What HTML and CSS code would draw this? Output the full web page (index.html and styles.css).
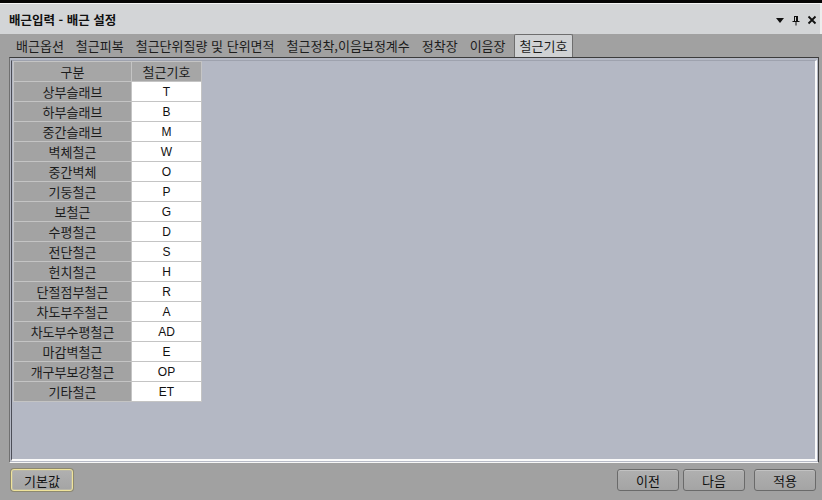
FILE: index.html
```html
<!DOCTYPE html>
<html lang="ko">
<head>
<meta charset="utf-8">
<title>배근입력 - 배근 설정</title>
<link rel="stylesheet" href="styles.css">
</head>
<body>
<div class="window">
  <div class="topline"></div>
  <div class="titlebar">
    <span class="title">배근입력 - 배근 설정</span>
    <div class="title-tools">
      <svg width="10" height="10" viewBox="0 0 10 10"><polygon points="1,3 9,3 5,8" fill="#111"/></svg>
      <svg width="10" height="11" viewBox="0 0 10 11"><path d="M3 1h4v5h1.5v1h-7v-1H3z M4 2v4h1V2z M4.5 7h1v3.5h-1z" fill="#111"/></svg>
      <svg width="10" height="10" viewBox="0 0 10 10"><path d="M1.5 1.5l7 7M8.5 1.5l-7 7" stroke="#111" stroke-width="1.8"/></svg>
    </div>
  </div>
  <div class="tabs">
    <span class="tab">배근옵션</span>
    <span class="tab">철근피복</span>
    <span class="tab">철근단위질량 및 단위면적</span>
    <span class="tab">철근정착,이음보정계수</span>
    <span class="tab">정착장</span>
    <span class="tab">이음장</span>
    <span class="tab active">철근기호</span>
  </div>
  <div class="panel">
    <div class="panel-inner">
      <table class="grid">
        <thead>
          <tr><th class="c1">구분</th><th class="c2">철근기호</th></tr>
        </thead>
        <tbody>
          <tr><td class="lbl">상부슬래브</td><td class="val">T</td></tr>
          <tr><td class="lbl">하부슬래브</td><td class="val">B</td></tr>
          <tr><td class="lbl">중간슬래브</td><td class="val">M</td></tr>
          <tr><td class="lbl">벽체철근</td><td class="val">W</td></tr>
          <tr><td class="lbl">중간벽체</td><td class="val">O</td></tr>
          <tr><td class="lbl">기둥철근</td><td class="val">P</td></tr>
          <tr><td class="lbl">보철근</td><td class="val">G</td></tr>
          <tr><td class="lbl">수평철근</td><td class="val">D</td></tr>
          <tr><td class="lbl">전단철근</td><td class="val">S</td></tr>
          <tr><td class="lbl">헌치철근</td><td class="val">H</td></tr>
          <tr><td class="lbl">단절점부철근</td><td class="val">R</td></tr>
          <tr><td class="lbl">차도부주철근</td><td class="val">A</td></tr>
          <tr><td class="lbl">차도부수평철근</td><td class="val">AD</td></tr>
          <tr><td class="lbl">마감벽철근</td><td class="val">E</td></tr>
          <tr><td class="lbl">개구부보강철근</td><td class="val">OP</td></tr>
          <tr><td class="lbl">기타철근</td><td class="val">ET</td></tr>
        </tbody>
      </table>
    </div>
  </div>
  <div class="footer">
    <button class="btn focus">기본값</button>
    <div class="spacer"></div>
    <button class="btn">이전</button>
    <button class="btn">다음</button>
    <button class="btn wide-gap">적용</button>
  </div>
</div>
</body>
</html>
```
FILE: styles.css
```css
html, body {
  margin: 0;
  padding: 0;
}
body {
  width: 822px;
  height: 500px;
  overflow: hidden;
  background: #a1a1a1;
  font-family: "Noto Sans CJK KR", "Noto Sans", sans-serif;
  font-size: 13px;
  color: #1a1a1a;
}
.window {
  display: flex;
  flex-direction: column;
  height: 500px;
}
.topline {
  height: 3px;
  background: #050505;
  border-bottom: 1px solid #f4f4f4;
}
.titlebar {
  height: 30px;
  background: #d3d5d7;
  display: flex;
  align-items: center;
  padding: 0 3px 0 9px;
  border-right: 2px solid #eceded;
}
.title {
  font-weight: bold;
  font-size: 12.5px;
  color: #101010;
  padding-top: 1px;
}
.title-tools {
  margin-left: auto;
  display: flex;
  align-items: center;
  gap: 6px;
  padding-top: 2px;
}
.tabs {
  height: 23px;
  display: flex;
  align-items: flex-end;
  padding-left: 10px;
}
.tab {
  height: 22px;
  line-height: 22px;
  padding: 0 6px;
  color: #1c1c1c;
  white-space: nowrap;
}
.tab.active {
  background: #d0d2d4;
  border: 1px solid #6e6e6e;
  border-bottom: none;
  border-radius: 2px 2px 0 0;
  height: 22px;
  padding: 0 5px;
  margin-left: 2px;
}
.panel {
  margin: 0 3px 0 9px;
  height: 406px;
  border-top: 1px solid #3c3c3c;
  border-left: 1px solid #707070;
  border-right: 1px solid #404040;
  border-bottom: 1px solid #f6f6f6;
  background: #b5b9c5;
  padding: 2px 1px 1px 1px;
  box-sizing: border-box;
}
.panel-inner {
  height: 100%;
  box-sizing: border-box;
  border-top: 1px solid #9ea2ae;
  border-left: 1px solid #4c4e58;
  border-right: 2px solid #fafafa;
  border-bottom: 2px solid #fafafa;
  padding: 0 0 0 1px;
  background: #b4b8c4;
}
.grid {
  border-collapse: collapse;
  font-size: 13px;
}
.grid th, .grid td {
  height: 19px;
  padding: 0;
  text-align: center;
  border: 1px solid #c4c4c4;
  line-height: 18px;
  font-weight: normal;
  color: #1c1c1c;
}
.grid th {
  background: #a6a6a6;
}
.grid .c1 { width: 117px; }
.grid .c2 { width: 69px; }
.grid td.lbl {
  background: #a3a3a3;
}
.grid td.val {
  background: #ffffff;
  font-family: "Liberation Sans", Arial, sans-serif;
  font-size: 12px;
  color: #111;
}
.footer {
  display: flex;
  align-items: center;
  padding: 6px 6px 0 11px;
  gap: 4px;
}
.spacer { flex: 1; }
.btn {
  width: 62px;
  height: 22px;
  font-family: "Noto Sans CJK KR", "Noto Sans", sans-serif;
  font-size: 13px;
  color: #111;
  background: linear-gradient(#b0b0b0, #a4a4a4);
  border: 1px solid #6a6a6a;
  border-radius: 3px;
  padding: 0;
  box-shadow: inset 0 1px 0 #c2c2c2;
}
.btn.focus {
  border: 1px solid #efe39a;
  box-shadow: 0 0 0 1px #8c8870, inset 0 0 0 1px #b8b6a8;
}
.btn.wide-gap {
  margin-left: 5px;
}
```
